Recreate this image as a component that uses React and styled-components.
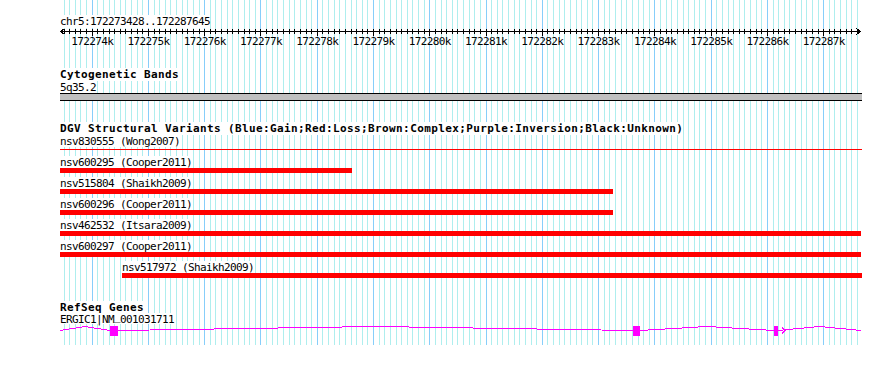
import React from "react";
import styled, { createGlobalStyle } from "styled-components";

const START = 172273428;
const END = 172287645;
const TRACK_W = 800;
const toX = (bp) => ((bp - START) * TRACK_W) / (END - START);

const mono = `"DejaVu Sans Mono", "Liberation Mono", monospace`;

const variants = [
  { name: "nsv600295 (Cooper2011)", x0: 0, x1: 292 },
  { name: "nsv515804 (Shaikh2009)", x0: 0, x1: 553 },
  { name: "nsv600296 (Cooper2011)", x0: 0, x1: 553 },
  { name: "nsv462532 (Itsara2009)", x0: 0, x1: 801 },
  { name: "nsv600297 (Cooper2011)", x0: 0, x1: 801 },
  { name: "nsv517972 (Shaikh2009)", x0: 62, x1: 802 },
];

// exons in track pixels, introns drawn as hats between them
const exons = [
  [50, 58],
  [573, 580],
  [714, 718],
];
const hats = [
  [0, 50],
  [58, 573],
  [580, 714],
  [718, 801],
];

const GlobalStyle = createGlobalStyle`
  html, body {
    margin: 0;
    padding: 0;
    background: #ffffff;
  }
`;

const Page = styled.div`
  width: 890px;
  height: 386px;
  padding-left: 60px;
  box-sizing: border-box;
  background: #ffffff;
  overflow: hidden;
`;

const Panel = styled.div`
  position: relative;
  width: 802px;
  height: 345px;
`;

const Grid = styled.svg`
  position: absolute;
  top: 0;
  left: 0;
  width: 802px;
  height: 345px;
  shape-rendering: crispEdges;
`;

const Tracks = styled.div`
  position: relative;
  display: flex;
  flex-direction: column;
  align-items: flex-start;
`;

const Label = styled.span`
  display: block;
  height: ${(p) => p.$h || 13}px;
  margin-top: ${(p) => p.$mt || 0}px;
  margin-left: ${(p) => p.$ml || 0}px;
  font-family: ${mono};
  font-size: 11px;
  line-height: 13px;
  font-weight: ${(p) => (p.$bold ? 700 : 400)};
  letter-spacing: ${(p) => (p.$bold ? "0.38px" : "-0.62px")};
  color: #000000;
  background: #ffffff;
  white-space: pre;
`;

// the bitmap font sits its underscore on the baseline
const Underscore = styled.span`
  position: relative;
  top: -3px;
`;

const Ruler = styled.svg`
  display: block;
  width: 802px;
  height: 20px;
  overflow: visible;

  line,
  polyline {
    shape-rendering: crispEdges;
  }
  text {
    font-family: ${mono};
    font-size: 11px;
    letter-spacing: -0.62px;
    fill: #000000;
  }
`;

const BandBar = styled.div`
  width: 802px;
  height: 8px;
  box-sizing: border-box;
  border-top: 1px solid #000000;
  border-bottom: 1px solid #000000;
  background: #c0c0c0;
`;

const HairLine = styled.div`
  width: 802px;
  height: 1px;
  margin-top: 2px;
  margin-bottom: 6px;
  background: #ff0000;
`;

const Row = styled.div`
  display: flex;
  flex-direction: column;
  align-items: flex-start;
  margin-bottom: 4px;
`;

const Bar = styled.div`
  height: 5px;
  background: #ff0000;
`;

const Gene = styled.svg`
  display: block;
  width: 802px;
  height: 14px;
  shape-rendering: crispEdges;
`;

function GridLines() {
  const lines = [];
  for (let bp = 172273500; bp <= 172287600; bp += 100) {
    const x = Math.floor(toX(bp)) + 0.5;
    const major = bp % 1000 === 0;
    lines.push(
      <line
        key={bp}
        x1={x}
        x2={x}
        y1={0}
        y2={345}
        stroke={major ? "#87cefa" : "#aeeeee"}
        strokeWidth={1}
      />
    );
  }
  return <Grid>{lines}</Grid>;
}

function ScaleBar() {
  const ticks = [];
  const labels = [];
  for (let bp = 172273500; bp <= 172287600; bp += 100) {
    const x = Math.floor(toX(bp)) + 0.5;
    const major = bp % 1000 === 0;
    ticks.push(
      <line key={bp} x1={x} x2={x} y1={1} y2={major ? 8 : 6} stroke="#000" />
    );
    if (major) {
      labels.push(
        <text key={bp} x={toX(bp)} y={16.5} textAnchor="middle">
          {bp / 1000}k
        </text>
      );
    }
  }
  return (
    <Ruler>
      <line x1={0} x2={801} y1={3.5} y2={3.5} stroke="#000" />
      <polyline points="4.5,0.5 0.5,3.5 4.5,6.5" fill="none" stroke="#000" />
      <polyline points="796.5,0.5 800.5,3.5 796.5,6.5" fill="none" stroke="#000" />
      {ticks}
      {labels}
    </Ruler>
  );
}

function GeneModel() {
  return (
    <Gene>
      {hats.map(([a, b]) => {
        const mid = (a + b) / 2;
        return (
          <polyline
            key={a}
            points={`${a},6.5 ${mid},2.5 ${b},6.5`}
            fill="none"
            stroke="#ff00ff"
          />
        );
      })}
      {exons.map(([a, b]) => (
        <rect key={a} x={a} y={2} width={b - a} height={10} fill="#ff00ff" />
      ))}
      <polyline points="722,3.5 725,6.5 722,9.5" fill="none" stroke="#ff00ff" />
    </Gene>
  );
}

export default function App() {
  return (
    <>
      <GlobalStyle />
      <Page>
        <Panel>
          <GridLines />
          <Tracks>
            <Label $mt={15}>chr5:172273428..172287645</Label>
            <ScaleBar />

            <Label $bold $mt={20}>Cytogenetic Bands</Label>
            <Label $h={12}>5q35.2</Label>
            <BandBar />

            <Label $bold $mt={21}>
              DGV Structural Variants (Blue:Gain;Red:Loss;Brown:Complex;Purple:Inversion;Black:Unknown)
            </Label>
            <Label $h={12}>nsv830555 (Wong2007)</Label>
            <HairLine />
            {variants.map((v) => (
              <Row key={v.name}>
                <Label $h={12} $ml={v.x0}>{v.name}</Label>
                <Bar style={{ marginLeft: v.x0, width: v.x1 - v.x0 }} />
              </Row>
            ))}

            <Label $bold $mt={19} $h={12}>RefSeq Genes</Label>
            <Label $h={11}>
              ERGIC1|NM<Underscore>_</Underscore>001031711
            </Label>
            <GeneModel />
          </Tracks>
        </Panel>
      </Page>
    </>
  );
}
